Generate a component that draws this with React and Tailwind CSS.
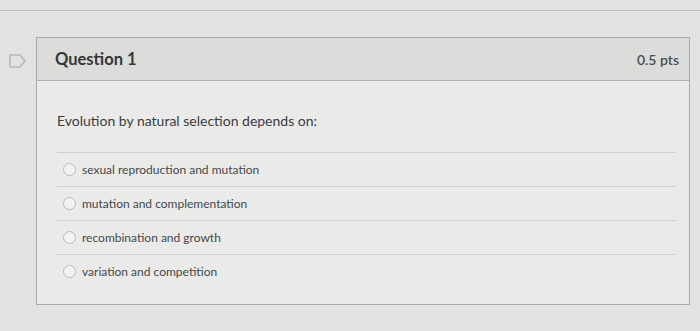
import React from 'react';

const answers = [
  'sexual reproduction and mutation',
  'mutation and complementation',
  'recombination and growth',
  'variation and competition',
];

const FlagIcon = () => (
  <svg width="20" height="16" viewBox="0 0 20 16" className="shrink-0">
    <path d="M2 2 H12 L17 8 L12 14 H2 Z" fill="none" stroke="#b8b8b6" strokeWidth="1.6" strokeLinejoin="round" />
  </svg>
);

export default function App() {
  return (
    <div className="w-[700px] h-[331px] overflow-hidden bg-[#e2e2e0] font-['Lato',sans-serif] text-[#3a3c40]">
      {/* top rule */}
      <div className="h-[11px] border-b border-[#bdbdbb]" />

      <div className="flex pt-[26px] pl-[8px] pr-[10px]">
        <div className="w-[28px] pt-[16px]">
          <FlagIcon />
        </div>

        {/* question card */}
        <div className="flex-1 h-[268px] border border-[#a9aaa8] bg-[#eaebe8]">
          <div className="h-[43px] flex items-center justify-between pl-[18px] pr-[10px] bg-[#dcdcda] border-b border-[#b0b1ae]">
            <span className="text-[16.5px] font-bold text-[#35373b]">Question 1</span>
            <span className="text-[14px] font-semibold text-[#4a4c50]">0.5 pts</span>
          </div>

          <div className="pl-[20px] pr-[13px]">
            <p className="pt-[29px] text-[14px] text-[#3a3c40]">Evolution by natural selection depends on:</p>
            <div className="mt-[21px]">
              {answers.map((a) => (
                <div key={a} className="h-[34px] flex items-center gap-[6px] pl-[6px] border-t border-[#cfd0cd]">
                  <span className="w-[13px] h-[13px] rounded-full border border-[#b9bab8] bg-[#f2f2f0]" />
                  <span className="text-[12px] text-[#45474b]">{a}</span>
                </div>
              ))}
            </div>
          </div>
        </div>
      </div>
    </div>
  );
}
